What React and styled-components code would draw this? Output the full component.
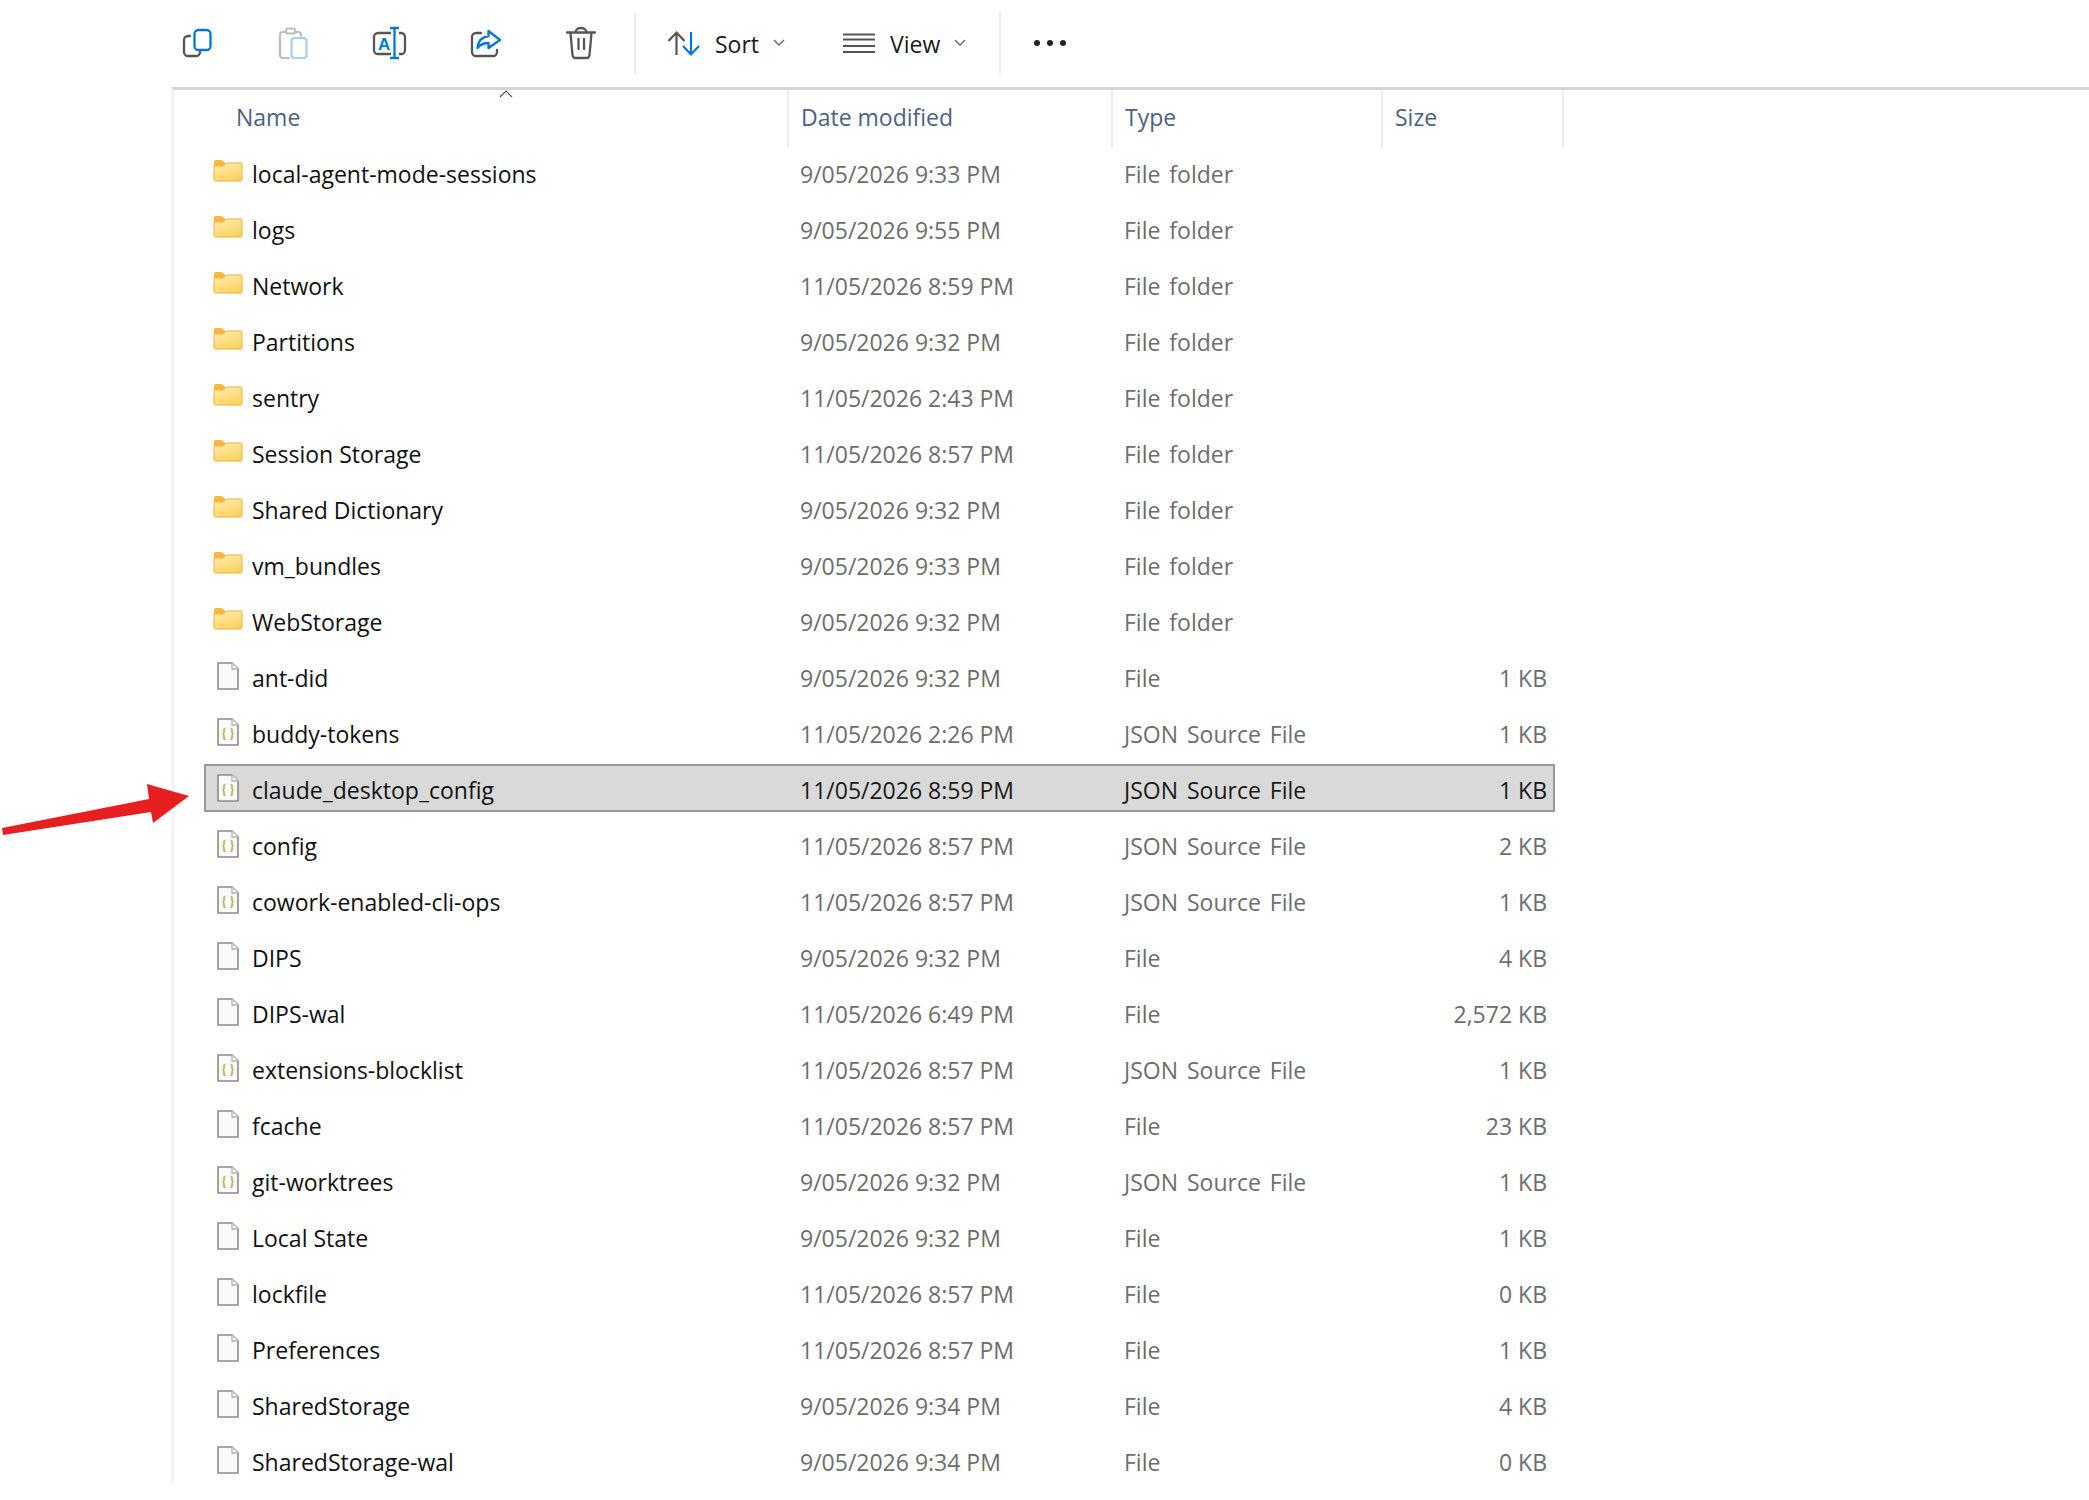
import styled, { createGlobalStyle } from "styled-components";

const GlobalStyle = createGlobalStyle`
  html, body {
    margin: 0;
    padding: 0;
    background: #fff;
    font-family: "Open Sans", "Noto Sans", "Liberation Sans", sans-serif;
  }
`;

const FILES = [
  { name: "local-agent-mode-sessions", date: "9/05/2026 9:33 PM", type: "File folder", kind: "folder" },
  { name: "logs", date: "9/05/2026 9:55 PM", type: "File folder", kind: "folder" },
  { name: "Network", date: "11/05/2026 8:59 PM", type: "File folder", kind: "folder" },
  { name: "Partitions", date: "9/05/2026 9:32 PM", type: "File folder", kind: "folder" },
  { name: "sentry", date: "11/05/2026 2:43 PM", type: "File folder", kind: "folder" },
  { name: "Session Storage", date: "11/05/2026 8:57 PM", type: "File folder", kind: "folder" },
  { name: "Shared Dictionary", date: "9/05/2026 9:32 PM", type: "File folder", kind: "folder" },
  { name: "vm_bundles", date: "9/05/2026 9:33 PM", type: "File folder", kind: "folder" },
  { name: "WebStorage", date: "9/05/2026 9:32 PM", type: "File folder", kind: "folder" },
  { name: "ant-did", date: "9/05/2026 9:32 PM", type: "File", size: "1 KB", kind: "file" },
  { name: "buddy-tokens", date: "11/05/2026 2:26 PM", type: "JSON Source File", size: "1 KB", kind: "json" },
  { name: "claude_desktop_config", date: "11/05/2026 8:59 PM", type: "JSON Source File", size: "1 KB", kind: "json", selected: true },
  { name: "config", date: "11/05/2026 8:57 PM", type: "JSON Source File", size: "2 KB", kind: "json" },
  { name: "cowork-enabled-cli-ops", date: "11/05/2026 8:57 PM", type: "JSON Source File", size: "1 KB", kind: "json" },
  { name: "DIPS", date: "9/05/2026 9:32 PM", type: "File", size: "4 KB", kind: "file" },
  { name: "DIPS-wal", date: "11/05/2026 6:49 PM", type: "File", size: "2,572 KB", kind: "file" },
  { name: "extensions-blocklist", date: "11/05/2026 8:57 PM", type: "JSON Source File", size: "1 KB", kind: "json" },
  { name: "fcache", date: "11/05/2026 8:57 PM", type: "File", size: "23 KB", kind: "file" },
  { name: "git-worktrees", date: "9/05/2026 9:32 PM", type: "JSON Source File", size: "1 KB", kind: "json" },
  { name: "Local State", date: "9/05/2026 9:32 PM", type: "File", size: "1 KB", kind: "file" },
  { name: "lockfile", date: "11/05/2026 8:57 PM", type: "File", size: "0 KB", kind: "file" },
  { name: "Preferences", date: "11/05/2026 8:57 PM", type: "File", size: "1 KB", kind: "file" },
  { name: "SharedStorage", date: "9/05/2026 9:34 PM", type: "File", size: "4 KB", kind: "file" },
  { name: "SharedStorage-wal", date: "9/05/2026 9:34 PM", type: "File", size: "0 KB", kind: "file" },
];

const BLUE = "#0078d4";
const GREY = "#555";

const Page = styled.div`
  position: relative;
  width: 2089px;
  height: 1500px;
  overflow: hidden;
  background: #fff;
`;

const Toolbar = styled.div`
  display: flex;
  align-items: center;
  height: 85px;
  margin-bottom: 2px;
  padding-left: 149px;
`;

const IconButton = styled.div`
  display: flex;
  align-items: center;
  justify-content: center;
  width: 96px;
  height: 36px;
`;

const Divider = styled.div`
  width: 2px;
  height: 62px;
  background: #eeeeee;
  margin-left: ${(p) => p.$left}px;
  margin-right: ${(p) => p.$right}px;
`;

const MenuButton = styled.div`
  display: flex;
  align-items: center;
  width: ${(p) => p.$width}px;
`;

const MenuLabel = styled.span`
  position: relative;
  top: 1px;
  font-size: 23px;
  color: #1a1a1a;
  margin-left: 13px;
  margin-right: 14px;
`;

const Content = styled.div`
  margin-left: 171px;
  height: 1396px;
  border-top: 3px solid #d5d5d5;
  border-left: 3px solid #f4f4f4;
  box-sizing: border-box;
  overflow: hidden;
`;

const HeaderRow = styled.div`
  position: relative;
  display: grid;
  grid-template-columns: 615px 324px 270px 181px;
  width: 1390px;
  height: 58px;
`;

const HeaderCell = styled.div`
  display: flex;
  align-items: center;
  padding-left: ${(p) => p.$pad}px;
  padding-bottom: 5px;
  font-size: 23px;
  color: #4d6280;
  border-right: 2px solid #ececec;
  box-sizing: border-box;
`;

const SortCaret = styled.svg`
  position: absolute;
  left: 325px;
  top: 0;
`;

const RowList = styled.div`
  display: flex;
  flex-direction: column;
  gap: 8px;
  padding-left: 30px;
`;

const Row = styled.div`
  display: grid;
  grid-template-columns: 583px 324px 270px 174px;
  align-items: center;
  width: 1351px;
  height: 48px;
  box-sizing: border-box;
  font-size: 23px;
  color: ${(p) => (p.$selected ? "#1a1a1a" : "#6d6d6d")};
  background: ${(p) => (p.$selected ? "#d9d9d9" : "transparent")};
  outline: ${(p) => (p.$selected ? "2px solid #999" : "none")};
  outline-offset: -2px;
`;

const NameCell = styled.div`
  display: flex;
  align-items: center;
  color: #111;
`;

const IconSlot = styled.div`
  display: flex;
  align-items: center;
  justify-content: center;
  width: 48px;
  flex: none;
`;

const CellText = styled.span`
  position: relative;
  top: 2px;
  white-space: nowrap;
`;

const TextCell = styled.div`
  padding-left: 13px;
  white-space: nowrap;
`;

const TypeCell = styled(TextCell)`
  word-spacing: 3px;
`;

const SizeCell = styled.div`
  text-align: right;
  padding-right: 8px;
  white-space: nowrap;
`;

const ArrowMark = styled.svg`
  position: absolute;
  left: 0;
  top: 780px;
`;

const CopyIcon = () => (
  <svg width="36" height="36" viewBox="0 0 36 36" fill="none" strokeWidth="2.3" strokeLinecap="round">
    <path d="M11 11H9a4 4 0 0 0-4 4v12a4 4 0 0 0 4 4h8a4 4 0 0 0 4-4" stroke={GREY} />
    <rect x="15.5" y="5" width="16" height="20" rx="4" stroke={BLUE} />
  </svg>
);

const PasteIcon = () => (
  <svg width="36" height="36" viewBox="0 0 36 36" fill="none" strokeWidth="2.2" strokeLinecap="round">
    <path d="M14 33H8a3 3 0 0 1-3-3V10a3 3 0 0 1 3-3h3M20 7h3a3 3 0 0 1 3 3v1" stroke="#bdbdbd" />
    <rect x="11" y="3.5" width="9" height="5" rx="2" stroke="#bdbdbd" />
    <rect x="16.5" y="13" width="15" height="20" rx="3" stroke="#a6d0f0" />
  </svg>
);

const RenameIcon = () => (
  <svg width="36" height="36" viewBox="0 0 36 36" fill="none" strokeWidth="2.3">
    <path d="M20 8H7a4 4 0 0 0-4 4v13a4 4 0 0 0 4 4h13M28 8h2a4 4 0 0 1 4 4v13a4 4 0 0 1-4 4h-2" stroke={GREY} />
    <path d="M19 3h9M23.5 3v30M19 33h9" stroke={BLUE} />
    <text x="7" y="25" fontSize="17" fontWeight="700" fill={BLUE} fontFamily="Liberation Sans, sans-serif">A</text>
  </svg>
);

const ShareIcon = () => (
  <svg width="36" height="36" viewBox="0 0 36 36" fill="none" strokeWidth="2.3" strokeLinejoin="round" strokeLinecap="round">
    <path d="M14 8H9a4 4 0 0 0-4 4v15a4 4 0 0 0 4 4h17a4 4 0 0 0 4-4v-2" stroke={GREY} />
    <path d="M21.5 6l11.5 9-11.500 8v-5c-4.500 0-8 1-11 5 .5-6 4-11 11-12z" stroke={BLUE} />
  </svg>
);

const TrashIcon = () => (
  <svg width="36" height="36" viewBox="0 0 36 36" fill="none" stroke={GREY} strokeWidth="2.3" strokeLinecap="round">
    <path d="M4 7.500h28M12.500 7.500c0-6 11-6 11 0M7.500 8l2 22a3 3 0 0 0 3 3h11a3 3 0 0 0 3-3l2-22M15.500 14v10M21 14v10" />
  </svg>
);

const SortIcon = () => (
  <svg width="36" height="36" viewBox="0 0 36 36" fill="none" strokeWidth="2.2">
    <path d="M10.500 30V8M2.500 16l8-8.500 8 8.500" stroke={GREY} />
    <path d="M25 7v22M17 21l8 8.500 8-8.500" stroke={BLUE} />
  </svg>
);

const ViewIcon = () => (
  <svg width="36" height="36" viewBox="0 0 36 36" fill="none" stroke={GREY} strokeWidth="2">
    <path d="M2 9.500h32M2 14.500h32M2 21h32M2 27h32" />
  </svg>
);

const Chevron = () => (
  <svg width="12" height="7" viewBox="0 0 12 7" fill="none" stroke="#666" strokeWidth="1.400">
    <path d="M1 1l5 5 5-5" />
  </svg>
);

const FolderIcon = () => (
  <svg width="30" height="26" viewBox="0 0 30 26">
    <defs>
      <linearGradient id="folderBody" x1="0.700" y1="1" x2="0.200" y2="0">
        <stop offset="0" stopColor="#fcd35f" />
        <stop offset="1" stopColor="#ffebab" />
      </linearGradient>
    </defs>
    <path d="M1 5V2.500A1.500 1.500 0 0 1 2.500 1H9l3 3h16.500V8H1z" fill="#f6b93a" />
    <path d="M1 7h9l3-3h15.500a.5.500 0 0 1 .5.500V21a1 1 0 0 1-1 1H2a1 1 0 0 1-1-1z" fill="url(#folderBody)" stroke="#efb43c" strokeWidth="1" />
  </svg>
);

const FileIcon = ({ json }) => (
  <svg width="22" height="28" viewBox="0 0 22 28" fill="none">
    <path d="M1 1h14l6 6v20H1z" fill="#fafafa" stroke="#8a8a8a" strokeWidth="1.600" />
    <path d="M15 1v6h6" fill="#fff" stroke="#b0b0b0" strokeWidth="1.300" />
    {json && (
      <path
        d="M8.500 10.500c-2 0-1.500 2-1.500 3.300s-.5 2.200-1.500 2.200c1 0 1.500 .9 1.500 2.200s-.5 3.300 1.500 3.300M13.500 10.500c2 0 1.500 2 1.500 3.300s.5 2.200 1.500 2.200c-1 0-1.500 .9-1.500 2.200s.5 3.300-1.500 3.300"
        stroke="#b8b84e"
        strokeWidth="1.700"
      />
    )}
  </svg>
);

const ItemIcon = ({ kind }) => {
  if (kind === "folder") return <FolderIcon />;
  return <FileIcon json={kind === "json"} />;
};

export default function App() {
  return (
    <Page>
      <GlobalStyle />
      <Toolbar>
        <IconButton><CopyIcon /></IconButton>
        <IconButton><PasteIcon /></IconButton>
        <IconButton><RenameIcon /></IconButton>
        <IconButton><ShareIcon /></IconButton>
        <IconButton><TrashIcon /></IconButton>
        <Divider $left={5} $right={30} />
        <MenuButton $width={175}>
          <SortIcon />
          <MenuLabel>Sort</MenuLabel>
          <Chevron />
        </MenuButton>
        <MenuButton $width={158}>
          <ViewIcon />
          <MenuLabel>View</MenuLabel>
          <Chevron />
        </MenuButton>
        <Divider $left={0} $right={33} />
        <svg width="32" height="8" viewBox="0 0 32 8" fill="#222">
          <circle cx="3" cy="4" r="3" />
          <circle cx="16" cy="4" r="3" />
          <circle cx="29" cy="4" r="3" />
        </svg>
      </Toolbar>
      <Content>
        <HeaderRow>
          <HeaderCell $pad={62}>Name</HeaderCell>
          <HeaderCell $pad={12}>Date modified</HeaderCell>
          <HeaderCell $pad={12}>Type</HeaderCell>
          <HeaderCell $pad={12}>Size</HeaderCell>
          <SortCaret width="14" height="8" viewBox="0 0 14 8" fill="none" stroke="#555" strokeWidth="1.200">
            <path d="M1 7l6-6 6 6" />
          </SortCaret>
        </HeaderRow>
        <RowList>
          {FILES.map((f) => (
            <Row key={f.name} $selected={f.selected}>
              <NameCell>
                <IconSlot><ItemIcon kind={f.kind} /></IconSlot>
                <CellText>{f.name}</CellText>
              </NameCell>
              <TextCell><CellText>{f.date}</CellText></TextCell>
              <TypeCell><CellText>{f.type}</CellText></TypeCell>
              <SizeCell><CellText>{f.size}</CellText></SizeCell>
            </Row>
          ))}
        </RowList>
      </Content>
      <ArrowMark width="200" height="60" viewBox="0 0 200 60">
        <path d="M2 48L149 19 147 4 189 16 153 43 151 32 3 55z" fill="#e81f1f" />
      </ArrowMark>
    </Page>
  );
}
